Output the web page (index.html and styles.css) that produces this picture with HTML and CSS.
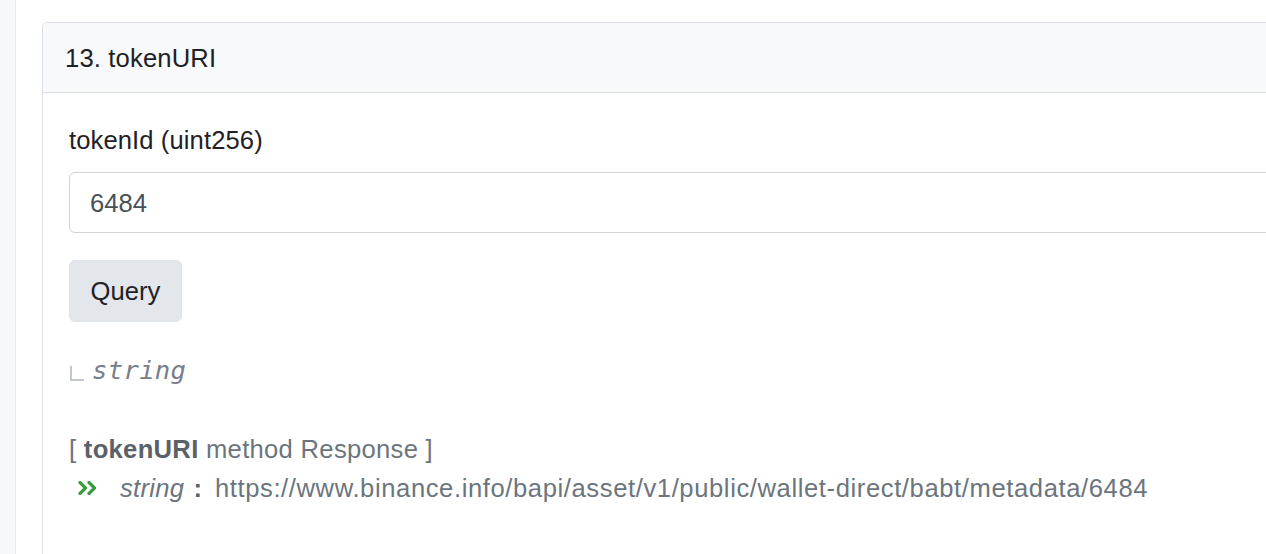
FILE: index.html
```html
<!DOCTYPE html>
<html lang="en">
<head>
<meta charset="utf-8">
<title>tokenURI</title>
<link rel="stylesheet" href="styles.css">
</head>
<body>
<div class="layout">
  <aside class="sidebar"></aside>
  <main class="main">
    <section class="card">
      <header class="card-header">13. tokenURI</header>
      <div class="card-body">
        <label class="field-label" for="tokenId">tokenId (uint256)</label>
        <input class="field-input" id="tokenId" type="text" value="6484">
        <button class="btn-query" type="button">Query</button>
        <div class="output-type"><span class="corner"></span><span class="mono">string</span></div>
        <div class="response">
          <div class="response-title">[ <strong>tokenURI</strong> method Response ]</div>
          <div class="response-row">
            <svg class="chevrons" viewBox="0 0 20 14" width="20" height="14" aria-hidden="true">
              <path d="M2 1.5 L7.5 7 L2 12.5" fill="none" stroke="currentColor" stroke-width="3.2" stroke-linecap="round" stroke-linejoin="round"/>
              <path d="M11 1.5 L16.5 7 L11 12.5" fill="none" stroke="currentColor" stroke-width="3.2" stroke-linecap="round" stroke-linejoin="round"/>
            </svg>
            <em class="rtype">string</em><b class="colon">:</b><span class="rvalue">https://www.binance.info/bapi/asset/v1/public/wallet-direct/babt/metadata/6484</span>
          </div>
        </div>
      </div>
    </section>
  </main>
</div>
</body>
</html>
```

FILE: styles.css
```css
html, body {
  margin: 0;
  padding: 0;
  background: #ffffff;
}
body {
  font-family: "Liberation Sans", Arial, Helvetica, sans-serif;
  font-size: 25.6px;
  color: #1f2225;
}
.layout {
  display: flex;
  height: 554px;
  overflow: hidden;
}
.sidebar {
  flex: 0 0 15px;
  background: #f7f8fa;
  border-right: 1px solid #e6e9ee;
}
.main {
  flex: 1 1 auto;
  min-width: 0;
  padding: 22px 0 0 26px;
  overflow: hidden;
}
.card {
  width: calc(100% + 40px);
  border: 1px solid #dcdfe3;
  border-radius: 5px;
  background: #ffffff;
  min-height: 600px;
}
.card-header {
  background: #f8f9fa;
  border-bottom: 1px solid #dcdfe3;
  border-radius: 5px 5px 0 0;
  padding: 16px 22px 14px 22px;
  line-height: 39px;
  color: #1f2225;
  letter-spacing: 0.15px;
}
.card-body {
  padding: 28px 26px 0 26px;
}
.field-label {
  display: block;
  line-height: 38px;
  margin-bottom: 13px;
  color: #1f2225;
  letter-spacing: 0.1px;
}
.field-input {
  display: block;
  box-sizing: border-box;
  width: 100%;
  height: 61px;
  margin: 0;
  padding: 2px 20px 0 20px;
  font-family: inherit;
  font-size: 25.6px;
  color: #495057;
  border: 1px solid #ced4da;
  border-radius: 6px;
  background: #fff;
  outline: none;
}
.btn-query {
  display: block;
  box-sizing: border-box;
  height: 62px;
  margin: 27px 0 0 0;
  padding: 1px 20.5px 0 20.5px;
  font-family: inherit;
  font-size: 25.6px;
  color: #1f2225;
  background: #e3e6ea;
  border: 1px solid #dfe2e6;
  border-radius: 6px;
}
.output-type {
  display: flex;
  align-items: center;
  margin-top: 29px;
  height: 38px;
  color: #77808a;
}
.corner {
  display: inline-block;
  width: 12px;
  height: 13px;
  margin: 6px 8px 0 1px;
  border-left: 2px solid #c2c7cd;
  border-bottom: 2px solid #c2c7cd;
}
.mono {
  font-family: "DejaVu Sans Mono", "Liberation Mono", monospace;
  font-style: italic;
  font-size: 25.6px;
  letter-spacing: 0.3px;
  color: #77808a;
}
.response {
  margin-top: 40px;
  color: #6c757d;
}
.response-title {
  line-height: 40px;
  letter-spacing: 0.3px;
}
.response-title strong {
  color: #5a6168;
}
.response-row {
  display: flex;
  align-items: center;
  line-height: 40px;
  margin-top: -1px;
}
.chevrons {
  color: #3a9d3f;
  margin: 0 22px 0 9px;
  flex: 0 0 auto;
}
.rtype {
  font-style: italic;
  letter-spacing: 0.3px;
}
.colon {
  margin: 0 13px 0 9px;
  color: #5a6168;
}
.rvalue {
  white-space: nowrap;
  letter-spacing: 0.6px;
}
```
